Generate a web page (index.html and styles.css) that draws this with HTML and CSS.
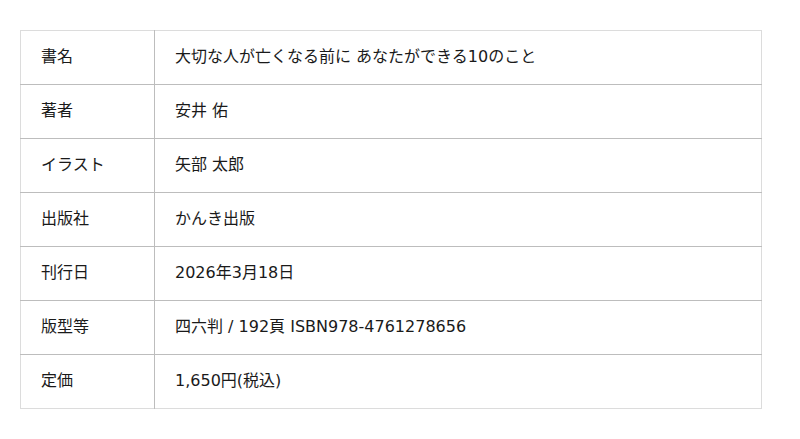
FILE: index.html
```html
<!DOCTYPE html>
<html lang="ja">
<head>
<meta charset="utf-8">
<link rel="stylesheet" href="styles.css">
</head>
<body>
<div class="wrap">
<table class="spec">
<tbody>
<tr><th>書名</th><td>大切な人が亡くなる前に あなたができる10のこと</td></tr>
<tr><th>著者</th><td>安井 佑</td></tr>
<tr><th>イラスト</th><td>矢部 太郎</td></tr>
<tr><th>出版社</th><td>かんき出版</td></tr>
<tr><th>刊行日</th><td>2026年3月18日</td></tr>
<tr><th>版型等</th><td>四六判 / 192頁 ISBN978-4761278656</td></tr>
<tr><th>定価</th><td>1,650円(税込)</td></tr>
</tbody>
</table>
</div>
</body>
</html>
```
FILE: styles.css
```css
html, body {
  margin: 0;
  padding: 0;
  background: #fff;
}
.wrap {
  padding: 30px 38px 0 20px;
}
.spec {
  width: 742px;
  border-collapse: collapse;
  border: 1px solid #dcdcdc;
  font-family: "DejaVu Sans", "Noto Sans CJK JP", sans-serif;
  font-size: 16px;
  line-height: 24px;
  color: #1a1a1a;
}
.spec th, .spec td {
  height: 54px;
  padding: 0 0 1px 20px;
  text-align: left;
  font-weight: normal;
  vertical-align: middle;
  border-top: 1px solid #bdbdbd;
  box-sizing: border-box;
}
.spec tr:first-child th, .spec tr:first-child td {
  border-top: 1px solid #dcdcdc;
}
.spec th {
  width: 134px;
  border-right: 1px solid #bdbdbd;
}
```
